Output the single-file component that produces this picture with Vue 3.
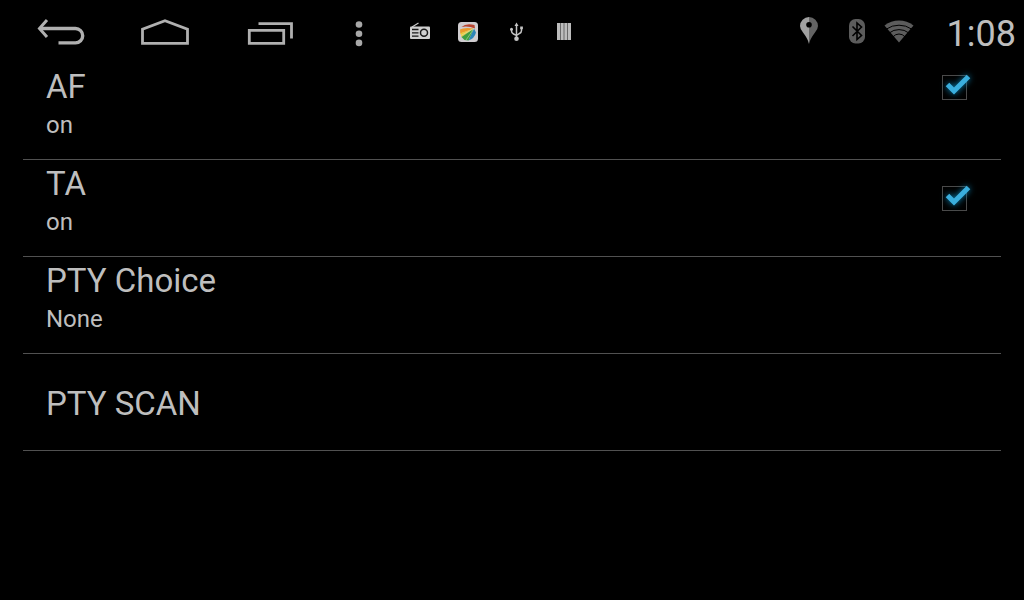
<script setup>
import { reactive } from 'vue'

const settings = reactive([
  { id: 'af', title: 'AF', toggle: true, on: true, place: 'high' },
  { id: 'ta', title: 'TA', toggle: true, on: true, place: 'mid' },
  { id: 'pty-choice', title: 'PTY Choice', summary: 'None' },
  { id: 'pty-scan', title: 'PTY SCAN' },
])
</script>

<template>
  <div class="screen">
    <header class="bar">
      <nav class="keys">
        <button type="button" aria-label="Back">
          <svg width="56" height="62" viewBox="33 0 56 62" fill="none" stroke="#b0b0b0" stroke-width="3">
            <path d="M40 28.500H75.500a7.200 7.200 0 0 1 0 14.400H58.500" stroke-width="3.400" />
            <path d="M47 20L39.500 28.500L47 37" />
          </svg>
        </button>
        <button type="button" aria-label="Home">
          <svg width="56" height="62" viewBox="137 0 56 62" fill="none" stroke="#b0b0b0" stroke-width="2.800">
            <path d="M142.500 43.400V29.300L165 20.800L187.500 29.300V43.400Z" />
          </svg>
        </button>
        <button type="button" aria-label="Recent apps">
          <svg width="56" height="62" viewBox="241 0 56 62" fill="none" stroke="#b0b0b0" stroke-width="2.800">
            <path d="M249.300 30.300H283.700V43.400H249.300Z" />
            <path d="M258.500 23.700H291.500V38.500" />
          </svg>
        </button>
        <button type="button" aria-label="More options">
          <svg width="28" height="62" viewBox="345 0 28 62" fill="#a8a8a8">
            <circle cx="359" cy="24.500" r="3.300" />
            <circle cx="359" cy="33.700" r="3.300" />
            <circle cx="359" cy="42.900" r="3.300" />
          </svg>
        </button>
      </nav>

      <div class="notices">
        <svg width="24" height="62" viewBox="408 0 24 62" role="img" aria-label="Radio">
          <path d="M412 27L418.500 23" stroke="#c8c8c8" stroke-width="1.300" />
          <rect x="410" y="26.500" width="20" height="12.500" rx="1" fill="#cfcfcf" />
          <path d="M412 29.500H418.500M412 32.800H418.500M412 36.100H418.500" stroke="#181818" stroke-width="1.300" />
          <circle cx="424" cy="32.800" r="3.500" fill="none" stroke="#181818" stroke-width="1.500" />
        </svg>
        <svg width="24" height="62" viewBox="456 0 24 62" role="img" aria-label="Gallery">
          <rect x="458" y="22" width="20" height="20" rx="3.500" fill="#d0cdd0" />
          <path d="M461.500 27Q466 22.800 474.500 25L475 28.500Q468 25.500 461.500 27Z" fill="#b8432f" />
          <path d="M460 29.500Q464 27 474 28.500L460.300 33.500Z" fill="#ec9a2d" />
          <path d="M474 28.500L460.300 33.200L461.500 37Z" fill="#ecc93a" />
          <path d="M474 28.500L461.500 37L464.500 40L468.500 40.500Z" fill="#3f9f3f" />
          <path d="M474 28.500L468.500 40.500Q474.500 38.500 476 32.500Z" fill="#2d86b8" />
          <path d="M474 28.500L460.800 35.500M474 28.500L466 40" stroke="#d6e5c9" stroke-width=".5" />
        </svg>
        <svg width="24" height="62" viewBox="504 0 24 62" fill="none" stroke="#c4c4c4" stroke-width="1.500" role="img" aria-label="USB">
          <path d="M516.500 25V38M511.500 29V31Q511.500 33 513.500 34L516.500 35.500L519.500 33.500Q521.500 32.500 521.500 30.500V28" />
          <path d="M516.500 22.500L518.500 26H514.500Z" fill="#c4c4c4" stroke="none" />
          <circle cx="516.500" cy="38.700" r="2.300" fill="#c4c4c4" stroke="none" />
          <circle cx="511.500" cy="29.300" r="1.500" fill="#c4c4c4" stroke="none" />
          <rect x="520.200" y="26.500" width="2.700" height="2.700" fill="#c4c4c4" stroke="none" />
        </svg>
        <svg width="24" height="62" viewBox="552 0 24 62" role="img" aria-label="Equalizer">
          <rect x="557" y="23" width="14" height="17" fill="#bcbcbc" />
          <path d="M560.500 23V40M564 23V40M567.500 23V40" stroke="#686868" stroke-width="1" />
        </svg>
      </div>

      <div class="status">
        <svg class="pin" width="20" height="62" viewBox="799 0 20 62" role="img" aria-label="Location">
          <path d="M809 44Q808 39 803 32.500Q800 28.800 800 26A9 9 0 0 1 809 17Z" fill="#a0a0a0" />
          <path d="M809 44Q810 39 815 32.500Q818 28.800 818 26A9 9 0 0 0 809 17Z" fill="#646464" />
          <circle cx="809" cy="24.800" r="2.800" fill="#000" />
        </svg>
        <svg class="tooth" width="20" height="62" viewBox="847 0 20 62" role="img" aria-label="Bluetooth">
          <rect x="849" y="19" width="16" height="24.500" rx="6.500" fill="#5c5c5c" />
          <path d="M852.500 26.500L861.500 35.500L857 39.500V23L861.500 27L852.500 36" fill="none" stroke="#000" stroke-width="1.600" />
        </svg>
        <svg class="wifi" width="30" height="62" viewBox="884 0 30 62" role="img" aria-label="Wi-Fi">
          <path d="M899 42.500L884.500 25.500Q891 20.500 899 20.500T913.500 25.500Z" fill="#5c5c5c" />
          <path d="M886.500 29Q892 25.200 899 25.200T911.500 29M889.500 32.800Q893.500 29.600 899 29.600T908.500 32.800M893 36.800Q895.500 34 899 34T905 36.800" fill="none" stroke="#000" stroke-width="1" />
        </svg>
        <time>1:08</time>
      </div>
    </header>

    <main>
      <ul>
        <li v-for="s in settings" :key="s.id">
          <label v-if="s.toggle" class="row" :for="s.id">
            <span class="text">
              <span class="title">{{ s.title }}</span>
              <span class="summary">{{ s.on ? 'on' : 'off' }}</span>
            </span>
            <span class="check" :class="s.place">
              <input :id="s.id" v-model="s.on" type="checkbox" />
              <svg v-if="s.on" width="40" height="40" viewBox="0 0 40 40" fill="none" aria-hidden="true">
                <path d="M11.500 17.500L18 24L32.500 9.500" stroke="#3aaedd" stroke-width="5" />
              </svg>
            </span>
          </label>
          <button v-else type="button" class="row" :class="{ single: !s.summary }">
            <span class="text">
              <span class="title">{{ s.title }}</span>
              <span v-if="s.summary" class="summary">{{ s.summary }}</span>
            </span>
          </button>
        </li>
      </ul>
    </main>
  </div>
</template>

<style>
html,
body {
  margin: 0;
  background: #000;
}
</style>

<style scoped>
.screen {
  min-height: 100vh;
  background: #000;
  color: #bebebe;
  font-family: Roboto, "Noto Sans", sans-serif;
}
.screen * {
  box-sizing: border-box;
}
svg {
  display: block;
  flex: none;
}
button {
  padding: 0;
  border: 0;
  background: none;
  color: inherit;
  font: inherit;
  text-align: left;
}
.bar {
  display: flex;
  align-items: flex-start;
  height: 63px;
  padding: 0 8px 0 33px;
}
.keys {
  display: flex;
  gap: 48px;
}
.notices {
  display: flex;
  gap: 24px;
  margin-left: 35px;
}
.status {
  display: flex;
  align-items: center;
  margin-left: auto;
}
.tooth {
  margin-left: 28px;
}
.wifi {
  margin-left: 17px;
}
time {
  margin-left: 33px;
  padding-top: 6px;
  font-size: 36px;
  line-height: 42px;
}
main {
  padding: 0 23px;
}
ul {
  margin: 0;
  padding: 0;
  list-style: none;
}
li {
  border-bottom: 1px solid #515151;
}
.row {
  display: flex;
  justify-content: space-between;
  width: 100%;
  min-height: 96px;
  padding: 4px 34px 16px 23px;
}
.single {
  align-items: center;
  padding-top: 6px;
  padding-bottom: 2px;
}
.title,
.summary {
  display: block;
}
.title {
  font-size: 33px;
  line-height: 40px;
}
.summary {
  font-size: 24px;
  line-height: 36px;
}
.check {
  position: relative;
  align-self: flex-start;
}
.high {
  margin-top: 8px;
}
.mid {
  margin-top: 22px;
}
.check input {
  display: block;
  width: 25px;
  height: 25px;
  margin: 0;
  appearance: none;
  border: 1px solid #4a4a4a;
}
.check svg {
  position: absolute;
  top: -8px;
  left: -6px;
  filter: drop-shadow(0 0 3px #0883b4);
}
</style>
